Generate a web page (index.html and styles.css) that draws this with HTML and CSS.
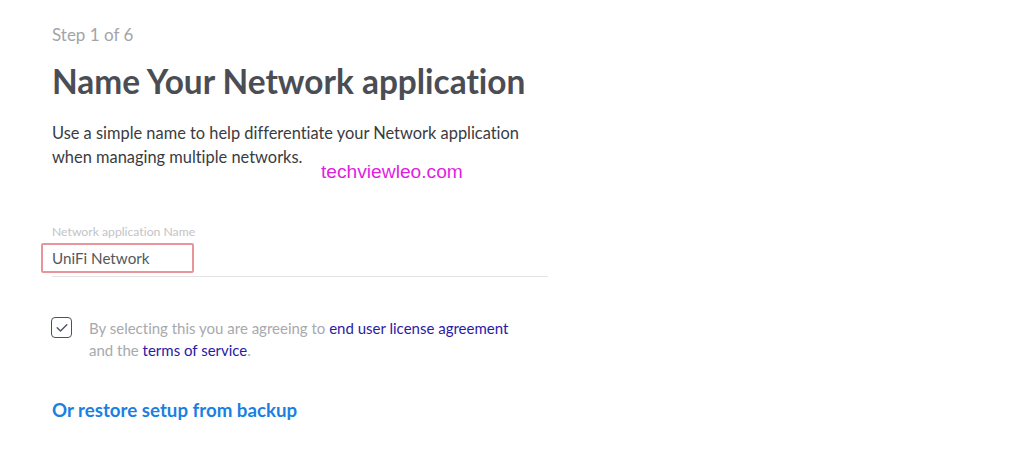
FILE: index.html
```html
<!DOCTYPE html>
<html lang="en">
<head>
    <meta charset="UTF-8">
    <meta name="viewport" content="width=device-width, initial-scale=1.0">
    <title>Name Your Network application</title>
    <link rel="stylesheet" href="styles.css">
</head>
<body>
    <div class="setup">
        <p class="step">Step 1 of 6</p>
        <h1>Name Your Network application</h1>
        <p class="intro">Use a simple name to help differentiate your Network application <span>when managing multiple networks.</span></p>
        <div class="watermark">techviewleo.com</div>

        <!-- name field -->
        <div class="field">
            <label for="appName">Network application Name</label>
            <div class="field-box">
                <input type="text" id="appName" value="UniFi Network">
            </div>
            <div class="field-line"></div>
        </div>

        <!-- eula -->
        <div class="agree">
            <span class="check">
                <svg width="12" height="10" viewBox="0 0 12 10"><path d="M1.2 4.8 L4.5 8 L10.8 1.8" fill="none" stroke="#4a5563" stroke-width="1.4" stroke-linecap="round" stroke-linejoin="round"/></svg>
            </span>
            <p>By selecting this you are agreeing to <a href="#">end user license agreement</a> and the <a href="#">terms of service</a>.</p>
        </div>

        <a class="restore" href="#">Or restore setup from backup</a>
    </div>
</body>
</html>
```

FILE: styles.css
```css
body {
    font-family: Lato, "Open Sans", sans-serif;
    font-variant-ligatures: none;
    background-color: #fff;
    margin: 0;
    padding: 0;
}

.setup {
    padding: 25px 0 0 52px;
    width: 496px;
}

.step {
    margin: 0;
    font-size: 17px;
    line-height: 20px;
    color: #a3a4a8;
}

h1 {
    margin: 16px 0 0;
    font-size: 33.4px;
    line-height: 40px;
    font-weight: 700;
    color: #4b4d55;
}

.intro {
    margin: 20px 0 0;
    height: 44px;
    font-size: 16.4px;
    line-height: 24px;
    color: #3a3b3f;
    width: 490px;
}

.watermark {
    margin: 0 0 0 269px;
    height: 14px;
    font-family: "Liberation Sans", Arial, sans-serif;
    font-size: 19.2px;
    line-height: 14px;
    color: #e21ee0;
}

.field {
    margin-top: 45px;
}

.field label {
    display: block;
    font-size: 12.2px;
    line-height: 15px;
    color: #c2c3c7;
}

.field-box {
    margin: 4px 0 0 -11px;
    width: 149px;
    height: 26px;
    border: 2px solid #e8949a;
    border-radius: 2px;
}

.field-box input {
    border: none;
    outline: none;
    padding: 0 0 0 9px;
    width: 130px;
    height: 26px;
    font-family: Lato, sans-serif;
    font-variant-ligatures: none;
    font-size: 15.2px;
    color: #55575c;
    background: transparent;
}

.field-line {
    margin-top: 3px;
    height: 1px;
    background-color: #e3e4e8;
}

.agree {
    display: flex;
    align-items: flex-start;
    margin-top: 40px;
}

.check {
    flex: none;
    display: flex;
    align-items: center;
    justify-content: center;
    width: 19px;
    height: 19px;
    border: 1.5px solid #3d5670;
    border-radius: 4px;
    margin-left: -1px;
}

.agree p {
    margin: 0 0 0 17px;
    width: 430px;
    font-size: 15px;
    line-height: 22px;
    color: #a8a9ad;
}

.agree a {
    color: #2a1aa6;
    text-decoration: none;
}

.restore {
    display: block;
    margin-top: 37px;
    font-size: 18.7px;
    line-height: 24px;
    font-weight: 700;
    color: #1b7fe2;
    text-decoration: none;
}
```
